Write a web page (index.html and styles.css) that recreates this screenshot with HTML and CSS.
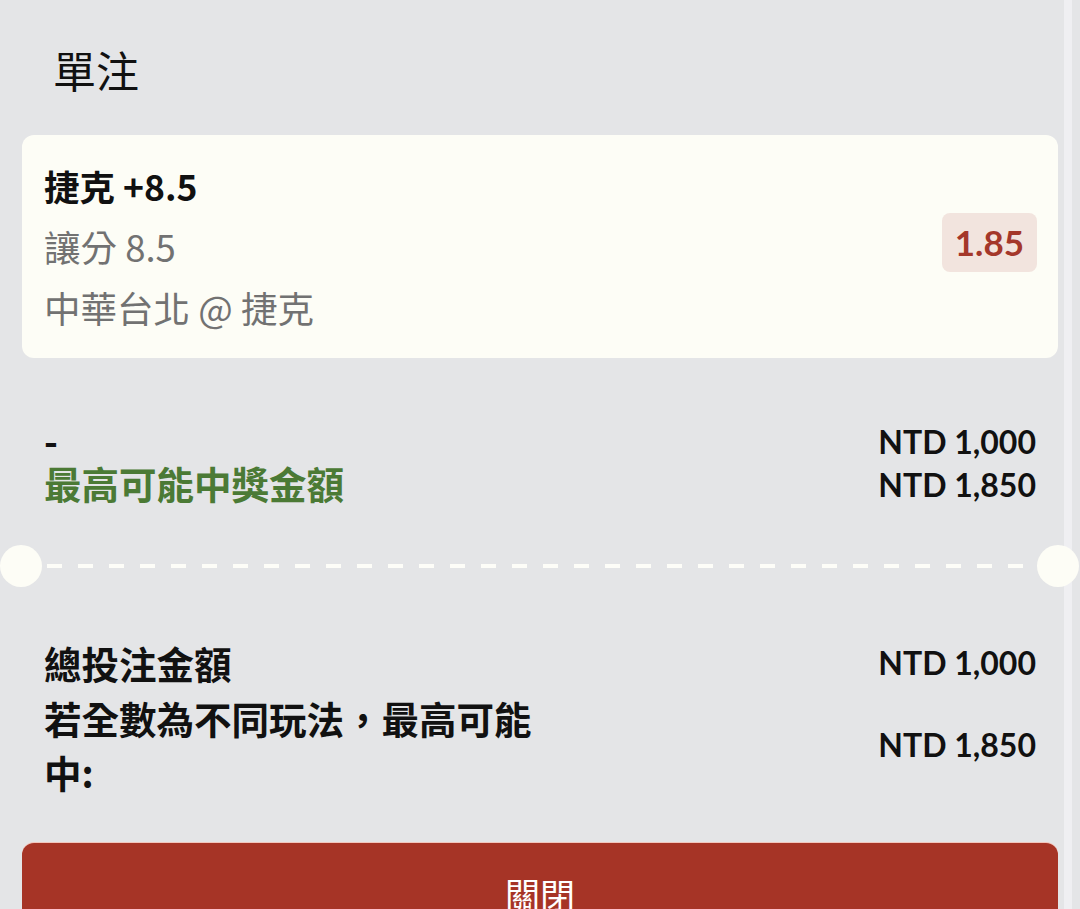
FILE: index.html
```html
<!DOCTYPE html>
<html lang="zh-Hant">
<head>
<meta charset="utf-8">
<title>單注</title>
<link rel="stylesheet" href="styles.css">
</head>
<body>
<div class="sheet">
  <div class="header">單注</div>

  <div class="card">
    <div class="card-info">
      <div class="pick">捷克 +8.5</div>
      <div class="muted">讓分 8.5</div>
      <div class="muted">中華台北 @ 捷克</div>
    </div>
    <div class="odds">1.85</div>
  </div>

  <div class="summary">
    <div class="row">
      <div class="label">-</div>
      <div class="amount">NTD 1,000</div>
    </div>
    <div class="row">
      <div class="label green">最高可能中獎金額</div>
      <div class="amount">NTD 1,850</div>
    </div>
  </div>

  <div class="divider">
    <span class="notch"></span>
    <span class="dashes"></span>
    <span class="notch"></span>
  </div>

  <div class="totals">
    <div class="row">
      <div class="label wrap">總投注金額</div>
      <div class="amount">NTD 1,000</div>
    </div>
    <div class="row">
      <div class="label wrap">若全數為不同玩法，最高可能中:</div>
      <div class="amount">NTD 1,850</div>
    </div>
  </div>

  <button class="close-btn">關閉</button>
</div>
</body>
</html>
```

FILE: styles.css
```css
html {
  background: linear-gradient(to right, #e4e5e7 0, #e4e5e7 1064px, #efeff2 1064px, #efeff2 1072px, #e4e5e7 1072px);
  min-height: 100%;
}
body {
  margin: 0;
  font-family: Lato, "Noto Sans CJK TC", sans-serif;
  color: #111;
}
.sheet {
  padding: 0 22px;
  overflow: hidden;
}
.header {
  height: 135px;
  box-sizing: border-box;
  padding: 45px 0 0 31px;
  line-height: 48px;
  font-family: "Noto Sans CJK TC", sans-serif;
  font-size: 43px;
  font-weight: 400;
  color: #111;
}
.card {
  height: 223px;
  box-sizing: border-box;
  background: #fdfdf6;
  border-radius: 12px;
  padding: 20px 21px 20px 22px;
  display: flex;
  align-items: center;
  justify-content: space-between;
}
.card-info {
  display: flex;
  flex-direction: column;
  font-family: "Noto Sans CJK TC", sans-serif;
}
.pick {
  font-size: 35.5px;
  font-weight: 700;
  line-height: 61px;
  color: #111;
}
.muted {
  font-size: 36.5px;
  font-weight: 400;
  line-height: 61px;
  color: #727272;
}
.odds {
  background: #f2e4de;
  color: #a4372a;
  font-weight: 700;
  font-size: 35px;
  line-height: 59px;
  padding: 0 13px;
  border-radius: 8px;
  margin-top: -8px;
}
.summary {
  margin-top: 62px;
  padding: 0 22px;
}
.row {
  display: flex;
  justify-content: space-between;
  align-items: center;
}
.summary .row {
  line-height: 43px;
}
.summary .label {
  margin-top: -4px;
}
.label {
  font-family: "Noto Sans CJK TC", sans-serif;
  font-size: 37.5px;
  font-weight: 700;
}
.green {
  color: #4b7a35;
}
.amount {
  font-size: 32px;
  font-weight: 700;
  color: #111;
}
.divider {
  margin: 39px -21px 0 -22px;
  display: flex;
  align-items: center;
}
.notch {
  width: 42px;
  height: 42px;
  border-radius: 50%;
  background: #fdfdf6;
  flex: none;
}
.dashes {
  flex: 1;
  height: 4px;
  margin: 0 5px;
  background: repeating-linear-gradient(to right, #fdfdf8 0, #fdfdf8 15px, transparent 15px, transparent 31px);
}
.totals {
  margin-top: 49px;
  padding: 0 22px;
}
.totals .row {
  line-height: 54px;
}
.totals .row + .row {
  margin-top: 1px;
}
.wrap {
  max-width: 505px;
}
.close-btn {
  display: block;
  width: 100%;
  height: 100px;
  margin-top: 44px;
  border: none;
  border-radius: 12px;
  background: #a63426;
  box-shadow: 0 -1px 0 #f2c6bd;
  color: #fff;
  font-family: "Noto Sans CJK TC", sans-serif;
  font-size: 35px;
  font-weight: 400;
  padding: 0;
}
```
